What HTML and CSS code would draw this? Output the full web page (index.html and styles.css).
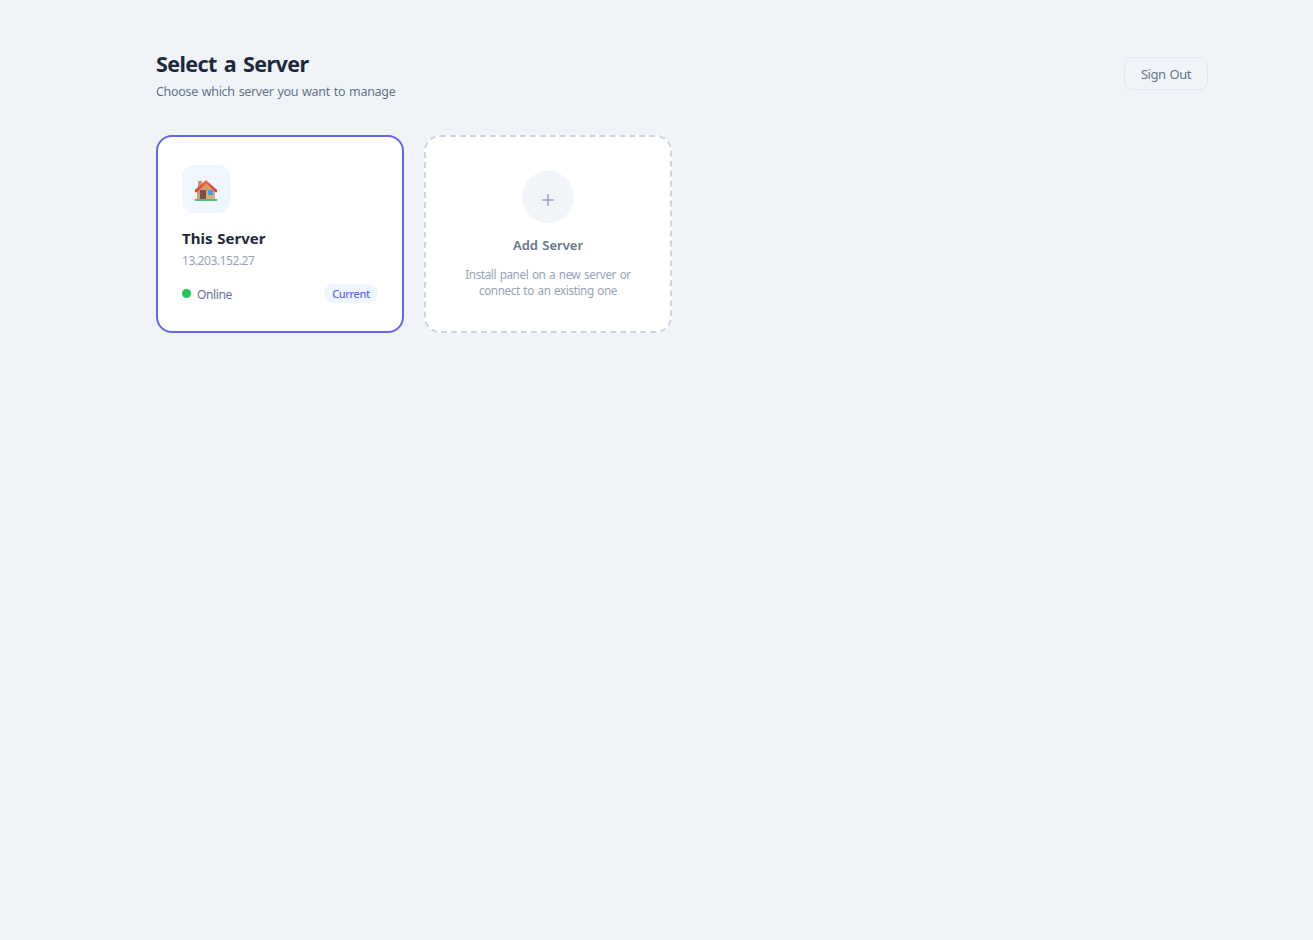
FILE: index.html
```html
<!DOCTYPE html>
<html lang="en">

<head>
  <meta charset="UTF-8">
  <meta name="viewport" content="width=device-width, initial-scale=1.0">
  <title>Select a Server</title>
  <link rel="stylesheet" href="styles.css">
</head>

<body>
  <div class="container">
    <header class="header">
      <div class="heading">
        <h1><span>Select a Server</span></h1>
        <p class="subtitle"><span>Choose which server you want to manage</span></p>
      </div>
      <button class="signout" type="button"><span>Sign Out</span></button>
    </header>

    <div class="grid">
      <div class="card current">
        <div class="card-icon">
          <svg width="24" height="24" viewBox="0 0 24 24">
            <defs>
              <linearGradient id="wall" x1="0" y1="0" x2="1" y2="1">
                <stop offset="0" stop-color="#c68a60"/>
                <stop offset="1" stop-color="#e6b282"/>
              </linearGradient>
              <linearGradient id="roof" x1="0" y1="0" x2="0" y2="1">
                <stop offset="0" stop-color="#f8733d"/>
                <stop offset="1" stop-color="#d83d3c"/>
              </linearGradient>
            </defs>
            <path d="M4 3h4v8H4z" fill="#c99a6b"/>
            <path d="M3 12L12 4l9 8v10H3z" fill="url(#wall)"/>
            <path d="M12 2L1 11.8v2.4h1.6L12 5.3l9.4 8.9H23v-2.4z" fill="url(#roof)"/>
            <path d="M6 12h6v9.5H6z" fill="#7d5148"/>
            <circle cx="10.5" cy="16.5" r=".6" fill="#4b302c"/>
            <path d="M14 12h5v5h-5z" fill="#35a9ef"/>
            <path d="M1.5 21h21a1 1 0 0 1 0 2h-21a1 1 0 0 1 0-2z" fill="#43c578"/>
          </svg>
        </div>
        <div class="name"><span>This Server</span></div>
        <div class="ip"><span>13.203.152.27</span></div>
        <div class="card-footer">
          <div class="status"><i class="dot"></i><span>Online</span></div>
          <div class="badge"><span>Current</span></div>
        </div>
      </div>

      <div class="card add">
        <div class="add-icon">
          <svg width="12" height="12" viewBox="0 0 12 12">
            <path d="M0 6h12M6 0v12" stroke="#94a3c0" stroke-width="1.4"/>
          </svg>
        </div>
        <div class="add-title"><span>Add Server</span></div>
        <div class="add-text"><span>Install panel on a new server or<br>connect to an existing one</span></div>
      </div>
    </div>
  </div>
</body>

</html>
```
FILE: styles.css
```css
* {
  box-sizing: border-box;
  margin: 0;
  padding: 0;
}

body {
  background: #f0f4f9;
  font-family: "Noto Sans", "Open Sans", sans-serif;
  color: #1e293b;
  word-spacing: 1px;
}

.container {
  width: 1052px;
  margin-left: 156px;
  padding-top: 48px;
}

.header {
  display: flex;
  justify-content: space-between;
  align-items: center;
  height: 51px;
  margin-bottom: 36px;
}

.heading {
  padding-top: 2px;
}

h1 {
  font-size: 21.5px;
  font-weight: 700;
  line-height: 30px;
  letter-spacing: -0.6px;
  word-spacing: 2px;
}

.subtitle {
  margin-top: 4px;
  font-size: 12.5px;
  line-height: 18px;
  letter-spacing: -0.32px;
  color: #64748b;
}

.signout {
  width: 84px;
  height: 33px;
  border: 1px solid #e2e8f0;
  border-radius: 8px;
  background: transparent;
  font-family: inherit;
  font-size: 13px;
  letter-spacing: -0.45px;
  word-spacing: 1px;
  color: #64748b;
}

.grid {
  display: grid;
  grid-template-columns: repeat(4, 1fr);
  gap: 20px;
}

.card {
  height: 198px;
  background: #fff;
  border-radius: 16px;
}

.current {
  padding: 28px 24px;
  border: 2px solid #6366f1;
}

.card-icon {
  display: flex;
  align-items: center;
  justify-content: center;
  width: 48px;
  height: 48px;
  padding-top: 2px;
  border-radius: 12px;
  background: #eff6ff;
}

.name {
  margin-top: 15px;
  font-size: 15px;
  font-weight: 700;
  line-height: 20px;
}

.ip {
  margin-top: 5px;
  font-size: 12px;
  line-height: 16px;
  letter-spacing: -0.45px;
  color: #94a3b8;
}

.card-footer {
  display: flex;
  justify-content: space-between;
  align-items: center;
  height: 20px;
  margin-top: 14px;
}

.status {
  display: flex;
  align-items: center;
  gap: 6px;
  font-size: 12px;
  line-height: 16px;
  letter-spacing: -0.4px;
  color: #64748b;
}

.status span {
  padding-top: 3px;
}

.dot {
  width: 9px;
  height: 9px;
  border-radius: 50%;
  background: #22c55e;
}

.badge {
  width: 54px;
  height: 19px;
  border-radius: 10px;
  background: #eff6ff;
  text-align: center;
  font-size: 11px;
  font-weight: 500;
  line-height: 19px;
  letter-spacing: -0.4px;
  color: #6366f1;
}

.add {
  display: flex;
  flex-direction: column;
  align-items: center;
  padding-top: 34px;
  border: 2px dashed #cbd5e1;
}

.add-icon {
  display: flex;
  align-items: center;
  justify-content: center;
  width: 52px;
  height: 52px;
  padding-top: 6px;
  border-radius: 50%;
  background: #f1f5f9;
}

.add-title {
  margin-top: 13px;
  font-size: 13px;
  font-weight: 600;
  line-height: 18px;
  color: #64748b;
}

.add-text {
  margin-top: 12px;
  text-align: center;
  font-size: 11.7px;
  line-height: 16px;
  letter-spacing: -0.4px;
  color: #94a3b8;
}
```
